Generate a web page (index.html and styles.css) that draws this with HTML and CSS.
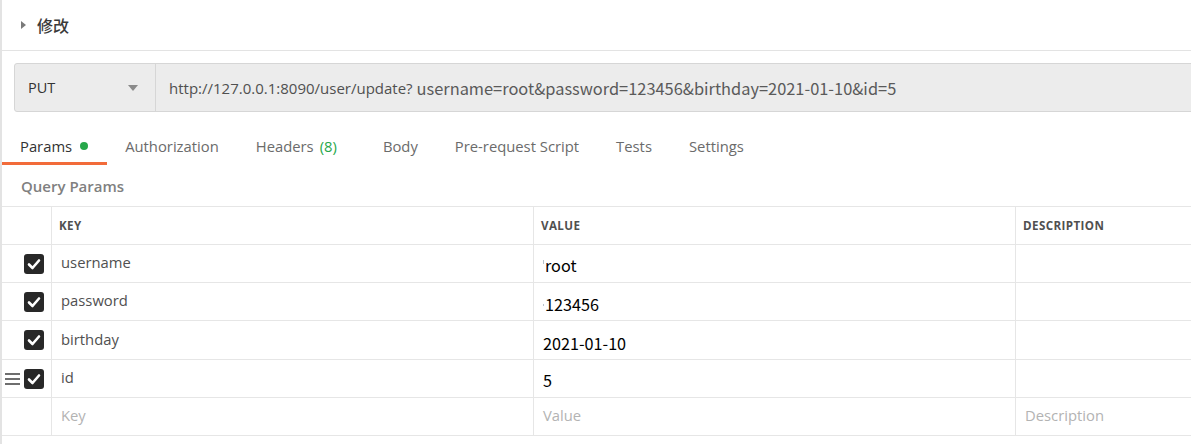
FILE: index.html
```html
<!DOCTYPE html>
<html lang="zh">
<head>
<meta charset="utf-8">
<title>修改</title>
<link rel="stylesheet" href="styles.css">
</head>
<body>
<div class="app">
  <div class="title-bar">
    <span class="caret"></span>
    <span class="title">修改</span>
  </div>

  <div class="url-row">
    <div class="method">
      <span>PUT</span>
      <span class="method-arrow"></span>
    </div>
    <div class="url"><span class="url-base">http://127.0.0.1:8090/user/update?</span><span class="url-query">username=root&amp;password=123456&amp;birthday=2021-01-10&amp;id=5</span></div>
  </div>

  <div class="tabs">
    <div class="tab active">Params <span class="dot"></span></div>
    <div class="tab">Authorization</div>
    <div class="tab">Headers <span class="count">(8)</span></div>
    <div class="tab">Body</div>
    <div class="tab">Pre-request Script</div>
    <div class="tab">Tests</div>
    <div class="tab">Settings</div>
  </div>

  <div class="section-title">Query Params</div>

  <div class="table">
    <div class="row head">
      <div class="cell c0"></div>
      <div class="cell">KEY</div>
      <div class="cell">VALUE</div>
      <div class="cell">DESCRIPTION</div>
    </div>
    <div class="row">
      <div class="cell c0"><span class="check"><svg viewBox="0 0 20 20" width="20" height="20"><path d="M5 10.5 L8.5 14 L15 6.5" /></svg></span></div>
      <div class="cell key">username</div>
      <div class="cell val"><span class="tick"></span>root</div>
      <div class="cell"></div>
    </div>
    <div class="row">
      <div class="cell c0"><span class="check"><svg viewBox="0 0 20 20" width="20" height="20"><path d="M5 10.5 L8.5 14 L15 6.5" /></svg></span></div>
      <div class="cell key">password</div>
      <div class="cell val low"><span class="tick dot-tick"></span>123456</div>
      <div class="cell"></div>
    </div>
    <div class="row tall">
      <div class="cell c0"><span class="check"><svg viewBox="0 0 20 20" width="20" height="20"><path d="M5 10.5 L8.5 14 L15 6.5" /></svg></span></div>
      <div class="cell key">birthday</div>
      <div class="cell val low">2021-01-10</div>
      <div class="cell"></div>
    </div>
    <div class="row">
      <div class="cell c0"><span class="handle"></span><span class="check"><svg viewBox="0 0 20 20" width="20" height="20"><path d="M5 10.5 L8.5 14 L15 6.5" /></svg></span></div>
      <div class="cell key">id</div>
      <div class="cell val">5</div>
      <div class="cell"></div>
    </div>
    <div class="row">
      <div class="cell c0"></div>
      <div class="cell ph">Key</div>
      <div class="cell ph">Value</div>
      <div class="cell ph">Description</div>
    </div>
  </div>
</div>
</body>
</html>
```

FILE: styles.css
```css
html, body {
  margin: 0;
  padding: 0;
  background: #ffffff;
  overflow: hidden;
}

body {
  font-family: "Open Sans", "Noto Sans", sans-serif;
  font-size: 14.8px;
  color: #505050;
}

.app {
  border-left: 2px solid #e3e3e3;
  min-height: 444px;
  box-sizing: border-box;
}

.title-bar {
  height: 50px;
  border-bottom: 1px solid #e3e3e3;
  display: flex;
  align-items: center;
  padding-left: 19px;
}

.caret {
  width: 0;
  height: 0;
  border-top: 4px solid transparent;
  border-bottom: 4px solid transparent;
  border-left: 5px solid #7a7a7a;
  margin-right: 11px;
}

.title {
  font-family: "Noto Sans CJK SC", sans-serif;
  font-size: 16px;
  font-weight: 500;
  color: #3a3a3a;
}

.url-row {
  display: flex;
  height: 49px;
  margin: 12px -6px 0 12px;
  background: #ececec;
  border: 1px solid #d6d6d6;
  border-radius: 3px;
  box-sizing: border-box;
}

.method {
  width: 141px;
  flex: none;
  border-right: 1px solid #d6d6d6;
  display: flex;
  align-items: center;
  justify-content: space-between;
  padding: 0 17px 0 13px;
  box-sizing: border-box;
  color: #333333;
  font-size: 14.5px;
}

.method-arrow {
  width: 0;
  height: 0;
  border-left: 5px solid transparent;
  border-right: 5px solid transparent;
  border-top: 6px solid #8a8a8a;
}

.url {
  display: flex;
  align-items: center;
  padding-left: 13px;
  white-space: nowrap;
  color: #505050;
}

.url-base {
  font-size: 15px;
}

.url-query {
  font-family: "Noto Sans CJK SC", sans-serif;
  font-size: 16.4px;
  color: #5a5a5a;
  padding-left: 4px;
}

.tabs {
  display: flex;
  height: 37px;
  margin-top: 16px;
}

.tab {
  display: flex;
  align-items: center;
  padding: 0 18.5px 2px;
  color: #6b6b6b;
  white-space: nowrap;
}

.tab.active {
  color: #333333;
  padding-left: 18px;
  box-shadow: inset 0 -3px 0 #f26b3a;
}

.dot {
  width: 8px;
  height: 8px;
  border-radius: 50%;
  background: #26a74a;
  margin-left: 8px;
}

.count {
  color: #26a74a;
  margin-left: 6px;
  margin-right: 9px;
}

.section-title {
  height: 41px;
  display: flex;
  align-items: center;
  padding-left: 19px;
  font-weight: 600;
  font-size: 15px;
  color: #808080;
}

.table {
  border-top: 1px solid #e6e6e6;
}

.row {
  display: grid;
  grid-template-columns: 50px 482px 482px 1fr;
  height: 38px;
  border-bottom: 1px solid #e6e6e6;
  box-sizing: border-box;
}

.row.tall {
  height: 39px;
}

.cell {
  display: flex;
  align-items: center;
  padding-left: 9px;
  border-right: 1px solid #e6e6e6;
  box-sizing: border-box;
  white-space: nowrap;
  overflow: hidden;
}

.cell:last-child {
  border-right: none;
}

.row.head .cell {
  padding-left: 7px;
  font-size: 11.6px;
  font-weight: 700;
  color: #505050;
  letter-spacing: 0.4px;
}

.cell.c0 {
  padding: 0 7px 0 0;
  justify-content: flex-end;
  position: relative;
}

.check {
  width: 20px;
  height: 20px;
  border-radius: 3px;
  background: #282828;
  display: block;
}

.check svg {
  display: block;
  fill: none;
  stroke: #ffffff;
  stroke-width: 2.6;
  stroke-linecap: round;
  stroke-linejoin: round;
}

.handle {
  position: absolute;
  left: 3px;
  top: 13px;
  width: 15px;
  height: 12px;
  background: linear-gradient(#6e6e6e 0 2px, transparent 2px 5px, #6e6e6e 5px 7px, transparent 7px 10px, #6e6e6e 10px 12px);
}

.key {
  color: #505050;
  padding-bottom: 3px;
}

.val {
  font-family: "Noto Sans CJK SC", sans-serif;
  font-size: 16.2px;
  color: #000000;
  padding-left: 9px;
  padding-top: 2px;
}

.val.low {
  padding-top: 5px;
}

.tick {
  width: 1px;
  height: 4px;
  background: #b8c2cc;
  margin-right: 1px;
  align-self: center;
  margin-top: -6px;
}

.tick.dot-tick {
  height: 2px;
  margin-top: 2px;
}

.ph {
  color: #b3b3b3;
  padding-bottom: 3px;
}
```
